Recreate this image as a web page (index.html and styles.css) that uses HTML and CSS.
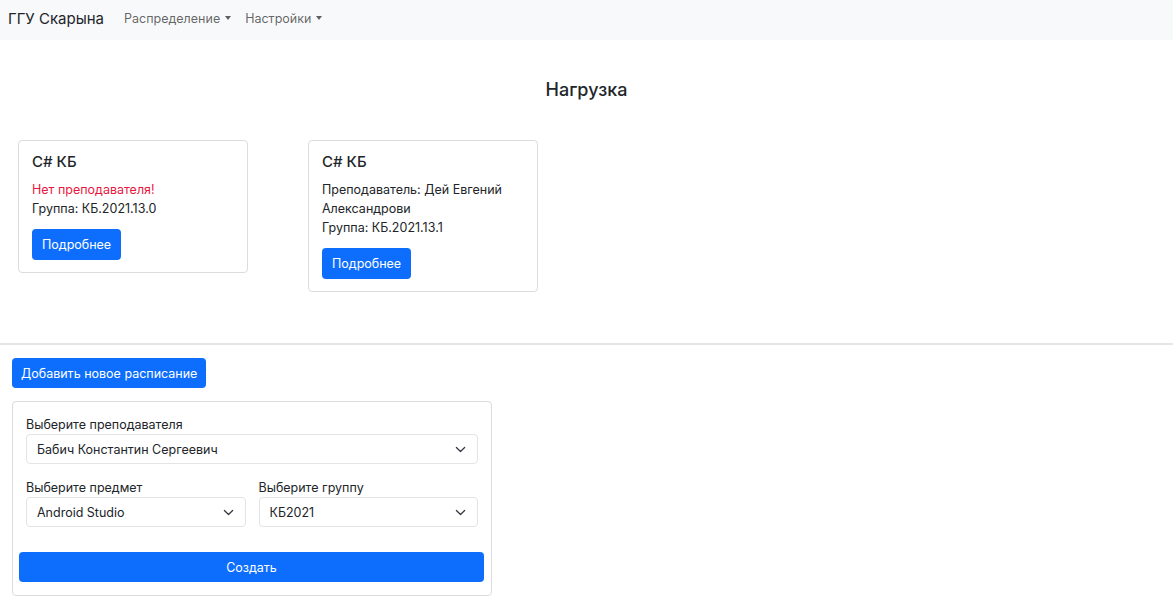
FILE: index.html
```html
<!DOCTYPE html>
<html lang="ru">
<head>
<meta charset="utf-8">
<title>Нагрузка</title>
<link rel="stylesheet" href="styles.css">
</head>
<body>
<div class="page">
  <nav class="navbar">
    <span class="brand">ГГУ Скарына</span>
    <ul class="nav-links">
      <li class="nav-link dropdown">Распределение</li>
      <li class="nav-link dropdown">Настройки</li>
    </ul>
  </nav>
  <main>
    <h1 class="page-title">Нагрузка</h1>
    <div class="cards">
      <div class="card">
        <h2 class="card-title">C# КБ</h2>
        <p class="card-text danger">Нет преподавателя!</p>
        <p class="card-text">Группа: КБ.2021.13.0</p>
        <a class="btn">Подробнее</a>
      </div>
      <div class="card">
        <h2 class="card-title">C# КБ</h2>
        <p class="card-text">Преподаватель: Дей Евгений Александрови</p>
        <p class="card-text">Группа: КБ.2021.13.1</p>
        <a class="btn">Подробнее</a>
      </div>
    </div>
    <hr class="divider">
    <section class="schedule">
      <button class="btn btn-add" type="button">Добавить новое расписание</button>
      <form class="form-card">
        <div class="field">
          <label class="field-label">Выберите преподавателя</label>
          <div class="select">
            <span>Бабич Константин Сергеевич</span>
            <svg class="chev" viewBox="0 0 16 16" width="11" height="11"><path d="M2 5l6 6 6-6" fill="none" stroke="#343a40" stroke-width="1.8" stroke-linecap="round" stroke-linejoin="round"/></svg>
          </div>
        </div>
        <div class="field-row">
          <div class="field">
            <label class="field-label">Выберите предмет</label>
            <div class="select">
              <span>Android Studio</span>
              <svg class="chev" viewBox="0 0 16 16" width="11" height="11"><path d="M2 5l6 6 6-6" fill="none" stroke="#343a40" stroke-width="1.8" stroke-linecap="round" stroke-linejoin="round"/></svg>
            </div>
          </div>
          <div class="field">
            <label class="field-label">Выберите группу</label>
            <div class="select">
              <span>КБ2021</span>
              <svg class="chev" viewBox="0 0 16 16" width="11" height="11"><path d="M2 5l6 6 6-6" fill="none" stroke="#343a40" stroke-width="1.8" stroke-linecap="round" stroke-linejoin="round"/></svg>
            </div>
          </div>
        </div>
        <button class="btn btn-block" type="button">Создать</button>
      </form>
    </section>
  </main>
</div>
</body>
</html>
```
FILE: styles.css
```css
* { box-sizing: border-box; }
html, body { margin: 0; padding: 0; background: #fff; }
body {
  font-family: Inter, "Liberation Sans", Arial, sans-serif;
  font-size: 12.5px;
  line-height: 19px;
  color: #212529;
}
.page { width: 1173px; }

.navbar {
  height: 40px;
  background: #f8f9fa;
  display: flex;
  align-items: center;
  padding: 0 0 4px 8px;
}
.brand {
  font-size: 15px;
  color: #212529;
  margin-right: 20px;
}
.nav-links {
  list-style: none;
  margin: 0;
  padding: 0;
  display: flex;
  gap: 14px;
}
.nav-link {
  font-size: 12.5px;
  color: rgba(0,0,0,.62);
}
.dropdown::after {
  content: "";
  display: inline-block;
  margin-left: 5px;
  vertical-align: 3px;
  border-top: 4px solid rgba(0,0,0,.62);
  border-left: 3.5px solid transparent;
  border-right: 3.5px solid transparent;
}

.page-title {
  margin: 39px 0 0;
  text-align: center;
  font-size: 18px;
  line-height: 22px;
  font-weight: 500;
}

.cards {
  display: flex;
  align-items: flex-start;
  gap: 60px;
  padding-left: 18px;
  margin-top: 39px;
  margin-bottom: 51px;
}
.card {
  width: 230px;
  border: 1px solid #dcdcdc;
  border-radius: 4px;
  padding: 12px 13px;
  display: flex;
  flex-direction: column;
  align-items: flex-start;
}
.card-title {
  margin: 0 0 9px;
  font-size: 15px;
  line-height: 18px;
  font-weight: 500;
}
.card-text { margin: 0; }
.danger { color: #e8173f; }
.card .btn { margin-top: 11px; height: 31px; padding: 0 10px; }

.btn {
  display: inline-flex;
  align-items: center;
  justify-content: center;
  height: 30px;
  padding: 0 10px;
  border: 0;
  border-radius: 4px;
  background: #0d6efd;
  color: #fff;
  font-family: inherit;
  font-size: 12.5px;
  text-decoration: none;
  cursor: pointer;
}
.btn-add { padding: 0 9px; }

.divider {
  margin: 0;
  border: 0;
  border-top: 2px solid #e6e6e6;
}

.schedule {
  padding: 13px 0 0 12px;
  display: flex;
  flex-direction: column;
  align-items: flex-start;
}
.form-card {
  margin-top: 13px;
  width: 480px;
  border: 1px solid #dcdcdc;
  border-radius: 4px;
  padding: 13px;
  display: flex;
  flex-direction: column;
}
.field { display: flex; flex-direction: column; }
.field-label { line-height: 19px; }
.field-row {
  display: grid;
  grid-template-columns: 1fr 1fr;
  gap: 13px;
  margin-top: 14px;
}
.select {
  height: 30px;
  border: 1px solid #e2e5e8;
  border-radius: 4px;
  display: flex;
  align-items: center;
  justify-content: space-between;
  padding: 0 11px 0 10px;
  color: #212529;
}
.chev { display: block; }
.btn-block {
  margin: 25px -6px 0 -7px;
  width: auto;
}
```
